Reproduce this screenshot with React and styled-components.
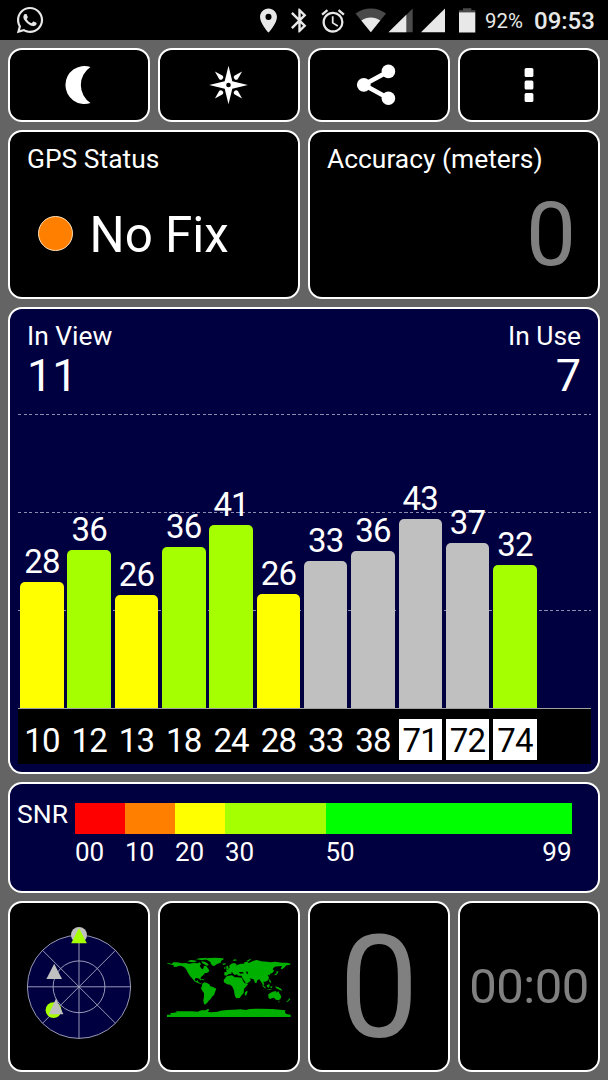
import styled, { createGlobalStyle } from "styled-components";
import { FaWhatsapp } from "react-icons/fa";
import { MdLocationOn, MdBluetooth, MdAlarm } from "react-icons/md";

const LIME = "#a6ff00";
const YELLOW = "#ffff00";
const GREY = "#c0c0c0";

// height is the bar height in px, the snr shown above it is rounded
const satellites = [
    { id: 10, snr: 28, height: 126.5, color: YELLOW },
    { id: 12, snr: 36, height: 158.5, color: LIME },
    { id: 13, snr: 26, height: 113, color: YELLOW },
    { id: 18, snr: 36, height: 161.3, color: LIME },
    { id: 24, snr: 41, height: 183, color: LIME },
    { id: 28, snr: 26, height: 114, color: YELLOW },
    { id: 33, snr: 33, height: 146.7, color: GREY },
    { id: 38, snr: 36, height: 157.5, color: GREY },
    { id: 71, snr: 43, height: 189, color: GREY, glonass: true },
    { id: 72, snr: 37, height: 165, color: GREY, glonass: true },
    { id: 74, snr: 32, height: 143.3, color: LIME, glonass: true },
];

const scale = [
    { label: "00", width: 50, color: "#ff0000" },
    { label: "10", width: 50, color: "#ff8000" },
    { label: "20", width: 50, color: YELLOW },
    { label: "30", width: 100.5, color: LIME },
    { label: "50", width: 246, color: "#00ff00", end: "99" },
];

export default function App(){
    return (
        <>
            <GlobalStyle />
            <Screen>
                <StatusBar />
                <Board>
                    <Panel><MoonIcon /></Panel>
                    <Panel><CompassIcon /></Panel>
                    <Panel><ShareIcon /></Panel>
                    <Panel><MenuIcon /></Panel>

                    <InfoPanel>
                        <Title>GPS Status</Title>
                        <Fix><Dot />No Fix</Fix>
                    </InfoPanel>
                    <InfoPanel>
                        <Title>Accuracy (meters)</Title>
                        <Accuracy>0</Accuracy>
                    </InfoPanel>

                    <SignalPanel>
                        <Counters>
                            <Counter><Title>In View</Title><Count>11</Count></Counter>
                            <Counter $right><Title>In Use</Title><Count>7</Count></Counter>
                        </Counters>
                        <Plot>
                            {satellites.map(({id, snr, height, color}) => (
                                <Column key={id}>
                                    <Value>{snr}</Value>
                                    <Bar $color={color} style={{height}} />
                                </Column>
                            ))}
                        </Plot>
                        <Axis>
                            {satellites.map(({id, glonass}) => <SatId key={id} $inverted={glonass}>{id}</SatId>)}
                        </Axis>
                    </SignalPanel>

                    <ScalePanel>
                        <ScaleName>SNR</ScaleName>
                        {scale.map(({label, width, color, end}) => (
                            <Step key={label} style={{width}}>
                                <Swatch $color={color} />
                                <StepLabels><span>{label}</span>{end && <span>{end}</span>}</StepLabels>
                            </Step>
                        ))}
                    </ScalePanel>

                    <Panel><SkyView /></Panel>
                    <Panel><WorldMap /></Panel>
                    <Panel><Speed>0</Speed></Panel>
                    <Panel><Clock>00:00</Clock></Panel>
                </Board>
            </Screen>
        </>
    )
}

function StatusBar(){
    return (
        <TopBar>
            <Notifications><FaWhatsapp size={30} /></Notifications>
            <MdLocationOn size={29} />
            <Bluetooth><MdBluetooth size={29} /></Bluetooth>
            <Alarm><MdAlarm size={28} /></Alarm>
            <SignalIcons />
            <Battery>92%</Battery>
            <Time>09:53</Time>
        </TopBar>
    )
}

function SignalIcons(){
    return (
        <svg width="122" height="26" viewBox="355 8 122 26">
            <path d="M355.5 13.6Q362 8.4 370.8 8.4T386 13.6L370.8 32.2z" fill="#4a4a4a" />
            <path d="M361.3 20.6Q365.5 17.4 370.8 17.4T380.2 20.6L370.8 32.2z" fill="#e8e8e8" />
            <path d="M388.5 32.3L412.7 8.5V32.3z" fill="#4a4a4a" />
            <path d="M388.5 32.3L406.3 14.8V32.3z" fill="#e8e8e8" />
            <path d="M421 32.3L445 8.5V32.3z" fill="#e8e8e8" />
            <path d="M463 8.3H471.3V10.3H475.3V12.3H459V10.3H463z" fill="#4a4a4a" />
            <path d="M459 12.3H475.3V32.5H459z" fill="#e8e8e8" />
        </svg>
    )
}

function MoonIcon(){
    return (
        <svg width="40" height="40" viewBox="58.5 65 40 40">
            <path d="M90 67A21.6 21.6 0 0 0 90 103A19 19 0 1 1 90 67z" fill="#fff" />
        </svg>
    )
}

function CompassIcon(){
    return (
        <svg width="40" height="40" viewBox="-19.5 -20 40 40" fill="#fff">
            <path fillRule="evenodd" d="M0 -19.3L3.8 -3.8L19.3 0L3.8 3.8L0 19.3L-3.8 3.8L-19.3 0L-3.8 -3.8zM0 -2.3A2.3 2.3 0 1 0 0 2.3A2.3 2.3 0 1 0 0 -2.3z" />
            {[0, 90, 180, 270].map((angle) => (
                <path key={angle} transform={`rotate(${angle})`} d="M13.6 -13.6L9.2 -5.8Q7.6 -4.4 6 -6Q4.4 -7.6 5.8 -9.2z" />
            ))}
        </svg>
    )
}

function ShareIcon(){
    return (
        <svg width="46" height="44" viewBox="356 63 46 44" fill="#fff">
            <path d="M388.4 71.4L363.8 84.8L388.4 98.2" fill="none" stroke="#fff" strokeWidth="4.6" />
            <circle cx="363.8" cy="84.8" r="6.9" />
            <circle cx="388.4" cy="71.4" r="6.8" />
            <circle cx="388.4" cy="98.2" r="6.8" />
        </svg>
    )
}

function MenuIcon(){
    return (
        <svg width="12" height="36" viewBox="-6 -18 12 36" fill="#fff">
            <rect x="-4.4" y="-17" width="8.8" height="9" rx="1.5" />
            <rect x="-4.4" y="-4.5" width="8.8" height="9" rx="1.5" />
            <rect x="-4.4" y="8" width="8.8" height="9" rx="1.5" />
        </svg>
    )
}

function SkyView(){
    return (
        <svg width="108" height="120" viewBox="24.8 927 108 120">
            <circle cx="78.8" cy="986.8" r="51.6" fill="#000040" />
            <g fill="none" stroke="#a9a9c4" strokeWidth="0.9">
                <circle cx="78.8" cy="986.8" r="51.6" />
                <circle cx="78.8" cy="986.8" r="25.9" />
                <path d="M27.2 986.8H130.4M78.8 935.2V1038.4M42.3 950.3L115.3 1023.3M115.3 950.3L42.3 1023.3" />
            </g>
            <circle cx="78.8" cy="935" r="8" fill={GREY} />
            <path d="M78.8 928L86.6 943.2H71z" fill={LIME} />
            <path d="M54 963.8L61.8 979H46.2z" fill={GREY} />
            <circle cx="53.3" cy="1010.2" r="7.9" fill={LIME} />
            <path d="M55.8 998.5L63.2 1014.3H48.6z" fill={GREY} />
        </svg>
    )
}

function WorldMap(){
    return (
        <svg width="124" height="62" viewBox="500 184 372 186" fill="#00b000">
            {/* north america */}
            <path d="M501 205L508 206L514 208L519 203L530 203L545 206L556 205L566 207L580 205L592 206L598 203L602 208L598 214L604 222L608 224L611 214L617 213L625 224L627 230L621 234L613 236L609 241L603 246L600 251L603 257L600 257L597 252L590 250L585 251L583 256L587 260L592 257L594 262L599 265L605 268L603 269L594 266L582 260L577 253L569 244L563 235L560 228L554 219L545 214L538 213L529 216L519 217L522 213L514 210L501 207z" />
            <path d="M561 200L571 196L580 197L590 199L583 203L570 202zM586 194L598 191L620 189L618 193L606 197L597 195zM603 200L613 201L621 206L625 211L620 213L612 209L606 206z" />
            <path d="M598 252L607 253L613 256L609 257L601 254z" />
            {/* greenland, iceland */}
            <path d="M612 193L625 190L645 189L668 191L670 194L662 199L661 204L650 208L642 214L637 213L632 208L630 202L622 197zM665 207L675 206L677 208L670 211z" />
            {/* south america */}
            <path d="M606 267L612 263L620 265L627 269L630 275L638 277L648 282L645 290L641 301L635 306L631 313L625 318L621 324L617 327L614 330L611 327L609 318L611 304L611 295L606 289L602 281L605 274z" />
            {/* eurasia */}
            <path d="M672 233L680 231L676 225L684 224L688 219L686 214L692 208L700 205L709 208L707 213L712 210L722 207L731 207L733 202L742 201L744 205L750 203L760 198L770 196L782 200L800 201L812 203L824 201L845 204L860 204L871 207L869 211L858 212L853 218L845 224L841 222L845 214L835 215L823 216L817 223L821 228L816 235L808 238L810 244L806 240L802 241L806 248L804 256L795 261L789 261L792 269L789 272L784 264L781 260L777 254L771 257L768 266L764 264L760 254L753 252L747 251L752 256L747 262L737 267L733 260L726 250L724 243L713 243L710 239L704 241L697 237L690 237L684 239L679 243L672 242z" />
            <path d="M695 232L699 238L703 243L698 241L692 234z" fill="#000" />
            <path d="M716 232L727 232L731 236L719 237zM738 230L743 232L742 239L738 236z" fill="#000" />
            <path d="M678 214L682 213L686 222L678 223zM672 218L676 218L675 222L671 222zM697 196L706 194L710 197L701 199zM738 199L748 194L753 193L744 201zM829 229L835 231L829 240L820 242L828 236z" />
            {/* africa */}
            <path d="M679 245L693 242L698 243L703 248L712 248L724 249L728 258L733 266L744 267L738 275L731 283L730 295L724 302L718 310L708 311L704 305L702 296L701 287L696 276L690 270L680 269L671 263L670 256zM740 288L742 291L737 303L733 301L734 293z" />
            {/* oceania */}
            <path d="M785 269L792 275L798 281L794 281L787 275zM799 272L807 268L808 273L805 279L800 277zM797 283L808 284L817 286L808 286zM811 274L817 276L813 281L810 279zM824 275L833 277L843 283L846 288L837 285L828 281zM806 253L811 258L812 266L807 261z" />
            <path d="M804 299L811 294L817 291L827 289L829 294L834 289L837 296L843 305L841 312L835 317L827 315L820 309L808 313L804 308zM834 320L838 320L836 324zM866 311L870 313L866 318L859 323L857 322L864 316z" />
            {/* antarctica */}
            <path d="M499 360L512 360L509 356L530 353L526 350L550 350L575 350L592 351L603 347L616 347L623 342L627 346L622 351L633 353L651 351L661 348L680 346L700 345L720 344L737 346L748 343L780 342L815 343L840 345L856 347L853 352L858 358L871 360V367H499z" />
        </svg>
    )
}

const GlobalStyle = createGlobalStyle`
    body{
        margin: 0;
        background-color: #646464;
    }
`
const Screen = styled.div`
    width: 608px;
    height: 1080px;
    box-sizing: border-box;
    overflow: hidden;
    background-color: #646464;
    color: #ffffff;
    font-family: Roboto, "Liberation Sans", sans-serif;
`
const TopBar = styled.header`
    height: 40px;
    display: flex;
    align-items: center;
    box-sizing: border-box;
    padding: 1px 0 0 15px;
    background-color: #000000;
    color: #e8e8e8;

    svg{
        flex-shrink: 0;
    }
`
const Notifications = styled.div`
    display: flex;
    width: 239px;
    padding-bottom: 1px;
`
const Bluetooth = styled.div`
    display: flex;
    margin-left: 2px;
`
const Alarm = styled.div`
    display: flex;
    margin: 0 8px 0 5px;
`
const Battery = styled.span`
    width: 49px;
    margin-left: 8px;
    font-size: 20.4px;
    line-height: 24px;
    padding-top: 1px;
`
const Time = styled.span`
    font-size: 24px;
    font-weight: 500;
    line-height: 28px;
    padding-top: 1px;
`
const Board = styled.main`
    display: grid;
    grid-template-columns: repeat(4, 1fr);
    grid-template-rows: 73.5px 169.5px 467.3px 111px 170.7px;
    gap: 8px;
    padding: 8px;
`
const Panel = styled.section`
    display: flex;
    align-items: center;
    justify-content: center;
    box-sizing: border-box;
    min-width: 0;
    border: 2px solid #ffffff;
    border-radius: 14px;
    background-color: #000000;
`
const InfoPanel = styled(Panel)`
    grid-column: span 2;
    flex-direction: column;
    align-items: stretch;
    justify-content: flex-start;
    padding: 12.2px 22px 0 17px;
`
const Title = styled.h2`
    margin: 0;
    font-size: 26.4px;
    font-weight: 400;
    line-height: 30px;
`
const Fix = styled.div`
    display: flex;
    align-items: center;
    gap: 16.5px;
    margin-top: 32px;
    padding-left: 11px;
    font-size: 49.3px;
    line-height: 59px;
`
const Dot = styled.i`
    box-sizing: border-box;
    width: 35px;
    height: 35px;
    margin-top: -3px;
    border: 1px solid #ffe0b8;
    border-radius: 50%;
    background-color: #ff8000;
`
const Accuracy = styled.div`
    margin-top: 11px;
    color: #808080;
    font-size: 89px;
    line-height: 100px;
    text-align: right;
`
const SignalPanel = styled(Panel)`
    grid-column: span 4;
    flex-direction: column;
    align-items: stretch;
    justify-content: flex-start;
    padding: 0 7.5px;
    background-color: #000040;
`
const Counters = styled.div`
    display: flex;
    justify-content: space-between;
    height: 105px;
    box-sizing: border-box;
    padding: 12px 9.5px 0;
`
const Counter = styled.div`
    text-align: ${({$right}) => $right ? "right" : "left"};
`
const Count = styled.div`
    margin-top: 2px;
    font-size: 45px;
    line-height: 46px;
`
const dashes = "repeating-linear-gradient(90deg, #8c8cae 0 3.2px, transparent 3.2px 5.6px)"
const Plot = styled.div`
    display: flex;
    align-items: flex-end;
    gap: 3.8px;
    height: 294px;
    padding-left: 2.7px;
    border-bottom: 1px solid #a0a0a0;
    background:
        ${dashes} 0 0 / 100% 1px no-repeat,
        ${dashes} 0 98px / 100% 1px no-repeat,
        ${dashes} 0 196px / 100% 1px no-repeat;
`
const Column = styled.div`
    width: 43.5px;
`
const Value = styled.div`
    margin-bottom: 4px;
    font-size: 33px;
    letter-spacing: -0.8px;
    line-height: 32px;
    text-align: center;
`
const Bar = styled.div`
    border-radius: 5px 5px 0 0;
    background-color: ${({$color}) => $color};
`
const Axis = styled.div`
    display: flex;
    gap: 3.8px;
    box-sizing: border-box;
    height: 54.5px;
    padding: 10px 0 0 2.7px;
    background-color: #000000;
`
const SatId = styled.div`
    box-sizing: border-box;
    width: 43.5px;
    height: 40.5px;
    padding-top: 1px;
    background-color: ${({$inverted}) => $inverted ? "#ffffff" : "#000000"};
    color: ${({$inverted}) => $inverted ? "#000000" : "#ffffff"};
    font-size: 33px;
    letter-spacing: -0.8px;
    line-height: 41px;
    text-align: center;
`
const ScalePanel = styled(Panel)`
    grid-column: span 4;
    align-items: flex-start;
    justify-content: flex-start;
    padding: 19px 7px 0;
    background-color: #000040;
`
const ScaleName = styled.div`
    width: 58px;
    font-size: 26.5px;
    line-height: 22px;
`
const Step = styled.div`
    flex-shrink: 0;
`
const Swatch = styled.div`
    height: 30.5px;
    background-color: ${({$color}) => $color};
`
const StepLabels = styled.div`
    display: flex;
    justify-content: space-between;
    margin-top: 3px;
    font-size: 26px;
    line-height: 30px;
`
const Speed = styled.div`
    padding-top: 4px;
    color: #808080;
    font-size: 142px;
    line-height: 170px;
`
const Clock = styled.div`
    padding-top: 1px;
    color: #808080;
    font-size: 49px;
    letter-spacing: -0.5px;
    line-height: 58px;
`
